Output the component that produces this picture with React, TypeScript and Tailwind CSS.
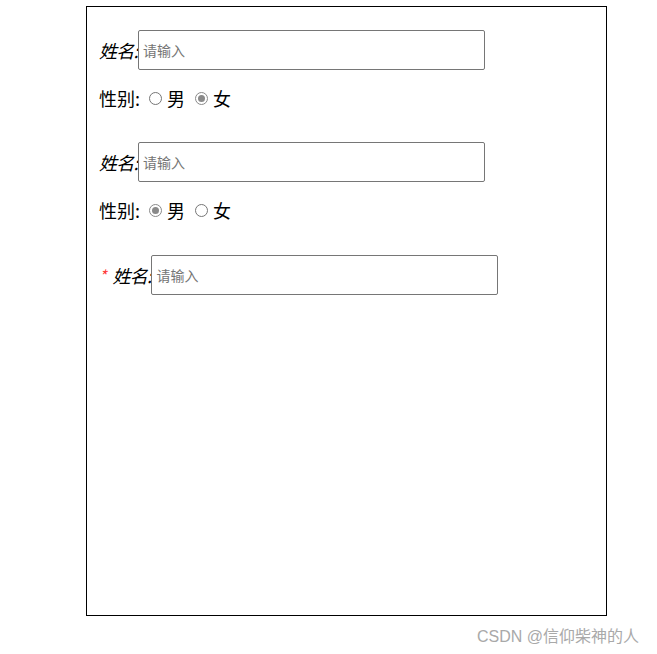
import React from "react";

const font = { fontFamily: '"Microsoft YaHei", "Noto Sans CJK SC", "Noto Sans", sans-serif' };

function Radio({ checked, label }: { checked?: boolean; label: string }) {
  return (
    <span className="flex items-center">
      {checked ? (
        <span className="ml-[4px] mr-[5px] w-[13px] h-[13px] rounded-full border border-[#8a8a8a] flex items-center justify-center">
          <span className="w-[7px] h-[7px] rounded-full bg-[#8a8a8a]" />
        </span>
      ) : (
        <span className="ml-[4px] mr-[5px] w-[13px] h-[13px] rounded-full border border-[#767676]" />
      )}
      <span className="text-[18px] leading-[24px] text-black">{label}</span>
    </span>
  );
}

function NameRow({ required }: { required?: boolean }) {
  return (
    <div className="flex items-center h-[40px]">
      {required && <span className="text-[#ff3b3b] text-[16px] italic mr-[6px]">*</span>}
      <span className="italic text-[18px] text-black leading-[24px] tracking-[-0.7px]">姓名:</span>
      <div className="w-[347px] h-[40px] border border-[#767676] rounded-[2px] flex items-center px-[4px] text-[14px] text-[#757575] bg-white">
        请输入
      </div>
    </div>
  );
}

function GenderRow({ male }: { male?: boolean }) {
  return (
    <div className="flex items-center mt-[16px] h-[24px]">
      <span className="text-[18px] leading-[24px] text-black mr-[5px]">性别:</span>
      <Radio checked={male} label="男" />
      <span className="w-[6px]" />
      <Radio checked={!male} label="女" />
    </div>
  );
}

export default function App() {
  return (
    <div className="w-[657px] h-[654px] bg-white relative" style={font}>
      <div className="ml-[86px] pt-[6px]">
        <div className="w-[521px] h-[610px] border border-black pl-[12px] pt-[23px] flex flex-col">
          <NameRow />
          <GenderRow />
          <div className="mt-[32px]">
            <NameRow />
          </div>
          <GenderRow male />
          <div className="mt-[33px]">
            <NameRow required />
          </div>
        </div>
      </div>
      <div
        className="absolute left-[477px] top-[627px] text-[16px] leading-[20px] text-[#a9a9a9]"
        style={{ fontFamily: '"Liberation Sans", "Noto Sans CJK SC", sans-serif' }}
      >
        CSDN @信仰柴神的人
      </div>
    </div>
  );
}
